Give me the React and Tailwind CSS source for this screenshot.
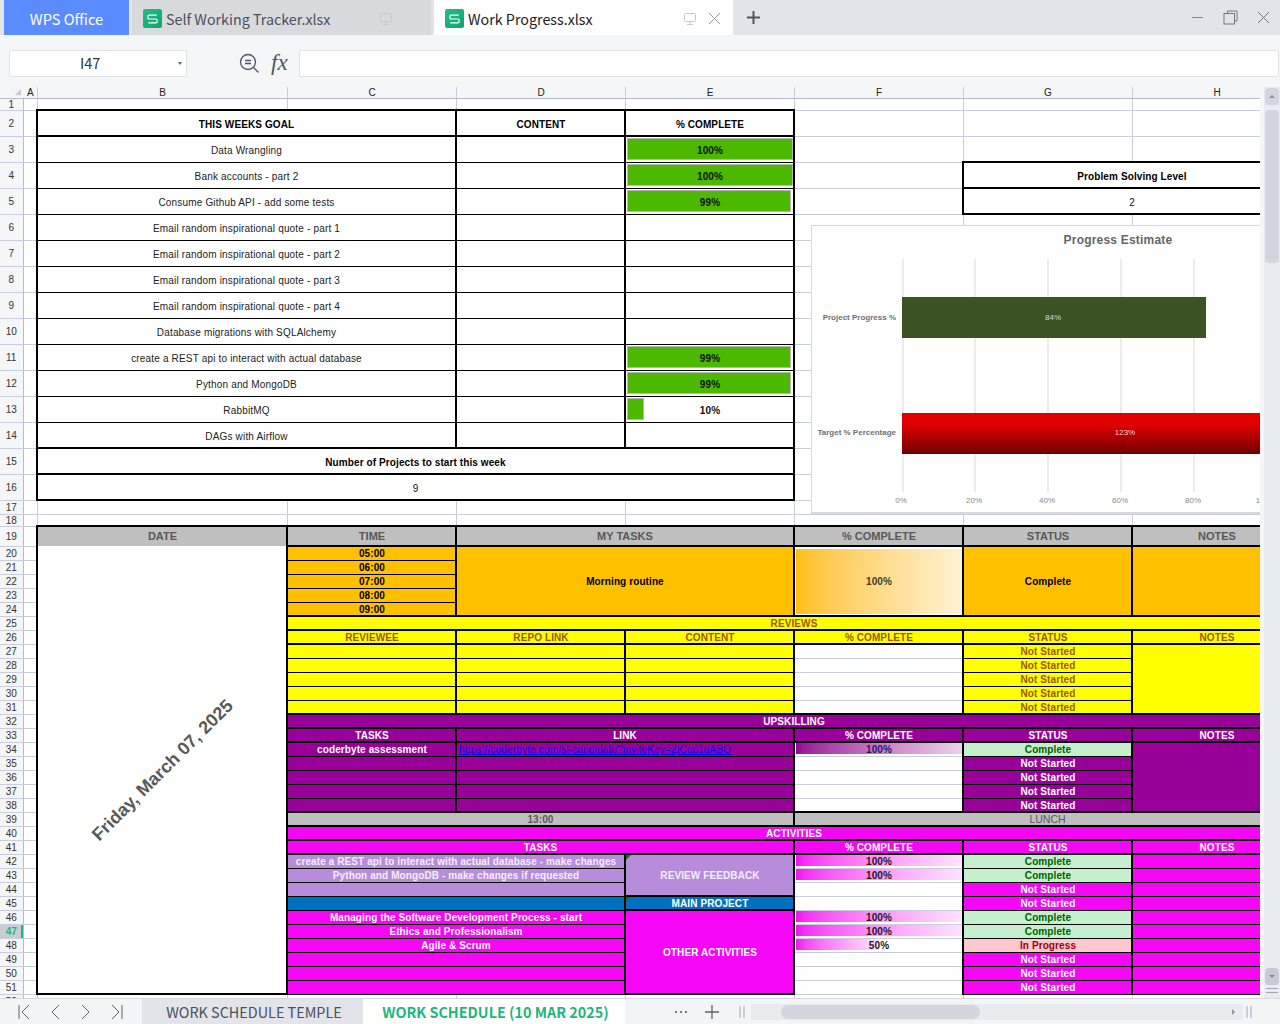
import React from "react";

const ui = "font-['Noto_Sans_CJK_SC','Noto_Sans',sans-serif]";
const GRID = "border border-[#c8cee0]";
const THICK = "border-2 border-black";
const BODY = "border-x-2 border-y border-black";
const SHELL = "p-0 text-center align-middle overflow-hidden whitespace-nowrap";
const BASE = `${SHELL} leading-none`;
const FT = "font-bold text-[10px] tracking-[0.1px]";
const B = `${FT} pt-[2px]`;
const BT = `${FT} pt-[4px]`;
const HEAD = "font-bold text-[11px]";
const GRAYC = "bg-[#bfbfbf] text-[#595959]";
const YEL = "bg-[#ffff00] text-[#9c5700]";
const PUR = "bg-[#990099] text-white";
const MAG = "bg-[#f507f5] text-white";
const ORG = "bg-[#ffc000] text-black";
const OK = "bg-[#c6efce] text-[#006100]";
const PROG = "bg-[#ffc7ce] text-[#9c0006]";
const LIL = "bg-[#b78ddb] text-[#f5eefc]";
const BLU = "bg-[#0070c0] text-white";
const H26 = "h-[26px]";
const H14 = "h-[14px]";

function C({ k = "", span, rows, children }) {
  return (
    <td colSpan={span} rowSpan={rows} className={`${BASE} ${span ? "" : "pl-[1px]"} ${k}`}>
      {children}
    </td>
  );
}

function Row({ n, h, active, children }) {
  return (
    <tr className={h}>
      <td className={`${SHELL} leading-[9px] pt-[1px] border-b border-r border-b-[#c8cee0] border-r-[#b4bbcf] text-[10px] ${active ? "bg-[#c9ccd4] text-[#1fb57c] font-bold shadow-[inset_-2px_0_0_#1fb57c]" : "bg-[#f5f6f8] text-[#333333]"}`}>{n}</td>
      <td className={`${BASE} ${GRID}`} />
      {children}
    </tr>
  );
}

const Gap = ({ n = 1 }) => Array.from({ length: n }, (_, i) => <td key={i} className={`${BASE} ${GRID}`} />);

function GoalBar({ pct, label }) {
  return (
    <div className="grid h-[22px] items-center text-[#111111]">
      <div className="[grid-area:1/1] h-[22px] bg-[#4cb800] border border-[#b5b5b5]" style={{ width: `${pct}%` }} />
      <div className={`[grid-area:1/1] pt-[4px] ${FT}`}>{label}</div>
    </div>
  );
}

function SmallBar({ pct, from, to, tc = "text-[#1b1b1b]" }) {
  return (
    <div className="grid h-[12px] items-start">
      <div className={`[grid-area:1/1] h-[11px] bg-linear-to-r ${from} ${to}`} style={{ width: `${pct}%` }} />
      <div className={`[grid-area:1/1] pt-[2px] ${FT} ${tc}`}>{pct}%</div>
    </div>
  );
}

const goals = [
  ["Data Wrangling", 100, "100%"],
  ["Bank accounts - part 2", 100, "100%"],
  ["Consume Github API - add some tests", 99, "99%"],
  ["Email random inspirational quote - part 1"],
  ["Email random inspirational quote - part 2"],
  ["Email random inspirational quote - part 3"],
  ["Email random inspirational quote - part 4"],
  ["Database migrations with SQLAlchemy"],
  ["create a REST api to interact with actual database", 99, "99%"],
  ["Python and MongoDB", 99, "99%"],
  ["RabbitMQ", 10, "10%"],
  ["DAGs with Airflow"],
];

const activity = [
  { n: 42, t: "create a REST api to interact with actual database - make changes", k: LIL, bar: 100, st: "Complete" },
  { n: 43, t: "Python and MongoDB - make changes if requested", k: LIL, bar: 100, st: "Complete" },
  { n: 44, t: "", k: LIL, st: "Not Started" },
  { n: 45, t: "", k: BLU, st: "Not Started" },
  { n: 46, t: "Managing the Software Development Process - start", k: MAG, bar: 100, st: "Complete" },
  { n: 47, t: "Ethics and Professionalism", k: MAG, bar: 100, st: "Complete" },
  { n: 48, t: "Agile & Scrum", k: MAG, bar: 50, st: "In Progress" },
  { n: 49, t: "", k: MAG, st: "Not Started" },
  { n: 50, t: "", k: MAG, st: "Not Started" },
  { n: 51, t: "", k: MAG, st: "Not Started" },
];

const Corner = () => (
  <span className="absolute top-0 left-0 w-0 h-0 border-t-[5px] border-t-[#0a7a0a] border-r-[5px] border-r-transparent" />
);

function Sheet() {
  const colHead = ["A", "B", "C", "D", "E", "F", "G", "H"];
  return (
    <table className="border-collapse table-fixed w-[1301px] font-['Liberation_Sans',Arial,sans-serif]">
      <colgroup>
        <col className="w-[23px]" />
        <col className="w-[14px]" />
        <col className="w-[250px]" />
        <col className="w-[169px]" />
        <col className="w-[169px]" />
        <col className="w-[169px]" />
        <col className="w-[169px]" />
        <col className="w-[169px]" />
        <col className="w-[169px]" />
      </colgroup>
      <tbody className="bg-white">
        <tr className="h-[11px]">
          <td className={`${BASE} bg-[#f5f6f8] border-b border-b-[#b4bbcf]`}>
            <svg width="23" height="10" viewBox="0 0 23 10" className="block"><path d="M21 2v6h-6z" fill="#c4c8d2" /></svg>
          </td>
          {colHead.map((c) => (
            <td key={c} className={`${SHELL} leading-[9px] pt-[1px] pl-[1px] bg-[#f5f6f8] border-b border-r border-b-[#b4bbcf] border-r-[#c8cee0] text-[10px] text-[#222222]`}>{c}</td>
          ))}
        </tr>
        <Row n={1} h="h-[12px]"><Gap n={7} /></Row>
        <Row n={2} h={H26}>
          <C span={2} k={`${THICK} ${BT}`}>THIS WEEKS GOAL</C>
          <C k={`${THICK} ${BT}`}>CONTENT</C>
          <C k={`${THICK} ${BT}`}>% COMPLETE</C>
          <Gap n={3} />
        </Row>
        {goals.map(([t, pct, label], i) => (
          <Row key={t} n={i + 3} h={H26}>
            <C span={2} k={`${BODY} pt-[4px] text-[10px] tracking-[0.17px] text-[#222222]`}>{t}</C>
            <C k={BODY} />
            <C k={BODY}>{pct ? <GoalBar pct={pct} label={label} /> : null}</C>
            <Gap />
            {i === 1 ? (
              <C span={2} k={`${THICK} ${BT}`}>Problem Solving Level</C>
            ) : i === 2 ? (
              <C span={2} k={`${THICK} pt-[4px] text-[10px] text-[#111111]`}>2</C>
            ) : (
              <Gap n={2} />
            )}
          </Row>
        ))}
        <Row n={15} h={H26}>
          <C span={4} k={`${THICK} ${BT}`}>Number of Projects to start this week</C>
          <Gap n={3} />
        </Row>
        <Row n={16} h={H26}>
          <C span={4} k={`${THICK} pt-[4px] text-[10px] text-[#111111]`}>9</C>
          <Gap n={3} />
        </Row>
        <Row n={17} h={H14}><Gap n={7} /></Row>
        <Row n={18} h="h-[12px]"><Gap n={7} /></Row>

        <Row n={19} h="h-[20px]">
          <C k={`border-x-2 border-t-2 border-b-0 border-black pb-[1px] ${GRAYC} ${HEAD}`}>DATE</C>
          <C k={`${THICK} ${GRAYC} ${HEAD}`}>TIME</C>
          <C span={2} k={`${THICK} ${GRAYC} ${HEAD}`}>MY TASKS</C>
          <C k={`${THICK} ${GRAYC} ${HEAD}`}>% COMPLETE</C>
          <C k={`${THICK} ${GRAYC} ${HEAD}`}>STATUS</C>
          <C k={`${THICK} ${GRAYC} ${HEAD}`}>NOTES</C>
        </Row>

        <Row n={20} h={H14}>
          <C rows={32} k="border-x-2 border-b-2 border-t-0 border-black bg-white">
            <span className="inline-block -rotate-45 font-bold text-[18px] text-[#595959]">Friday, March 07, 2025</span>
          </C>
          <C k={`${BODY} ${ORG} ${B}`}>05:00</C>
          <C span={2} rows={5} k={`${THICK} ${ORG} ${B}`}>Morning routine</C>
          <C rows={5} k={`${THICK} bg-white`}>
            <div className={`h-[65px] bg-linear-to-r from-[#ffc000] to-[#fff2d2] flex items-center justify-center ${B} text-[#3f3a1a]`}>100%</div>
          </C>
          <C rows={5} k={`${THICK} ${ORG} ${B}`}>Complete</C>
          <C rows={5} k={`${THICK} ${ORG}`} />
        </Row>
        {["06:00", "07:00", "08:00", "09:00"].map((t, i) => (
          <Row key={t} n={21 + i} h={H14}>
            <C k={`${BODY} ${ORG} ${B}`}>{t}</C>
          </Row>
        ))}

        <Row n={25} h={H14}>
          <C span={6} k={`${THICK} ${YEL} ${B}`}>REVIEWS</C>
        </Row>
        <Row n={26} h={H14}>
          {["REVIEWEE", "REPO LINK", "CONTENT", "% COMPLETE", "STATUS", "NOTES"].map((t) => (
            <C key={t} k={`${THICK} ${YEL} ${B}`}>{t}</C>
          ))}
        </Row>
        {[27, 28, 29, 30, 31].map((n) => (
          <Row key={n} n={n} h={H14}>
            <C k={`${BODY} ${YEL}`} />
            <C k={`${BODY} ${YEL}`} />
            <C k={`${BODY} ${YEL}`} />
            <C k="border-x-2 border-x-black border-y border-y-[#c8cee0] bg-white" />
            <C k={`${BODY} ${YEL} ${B}`}>Not Started</C>
            {n === 27 ? <C rows={5} k={`${THICK} ${YEL}`} /> : null}
          </Row>
        ))}

        <Row n={32} h={H14}>
          <C span={6} k={`${THICK} ${PUR} ${B}`}>UPSKILLING</C>
        </Row>
        <Row n={33} h={H14}>
          <C k={`${THICK} ${PUR} ${B}`}>TASKS</C>
          <C span={2} k={`${THICK} ${PUR} ${B}`}>LINK</C>
          <C k={`${THICK} ${PUR} ${B}`}>% COMPLETE</C>
          <C k={`${THICK} ${PUR} ${B}`}>STATUS</C>
          <C k={`${THICK} ${PUR} ${B}`}>NOTES</C>
        </Row>
        {[34, 35, 36, 37, 38].map((n) => (
          <Row key={n} n={n} h={H14}>
            <C k={`${BODY} ${PUR} ${B}`}>{n === 34 ? "coderbyte assessment" : ""}</C>
            <C span={2} k={`${BODY} ${PUR} text-left pl-[2px] pt-[2px] text-[10px] tracking-[0.17px]`}>
              {n === 34 ? (
                <a href="#" className="text-[#0000ff] underline">https://coderbyte.com/sl-candidate?inviteKey=ZjCac1uABQ</a>
              ) : null}
            </C>
            <C k="border-x-2 border-x-black border-y border-y-[#c8cee0] bg-white">
              {n === 34 ? <SmallBar pct={100} from="from-[#990099]" to="to-[#ecd2ec]" tc="text-[#1e1a6e]" /> : null}
            </C>
            <C k={`${BODY} ${n === 34 ? OK : PUR} ${B}`}>{n === 34 ? "Complete" : "Not Started"}</C>
            {n === 34 ? <C rows={5} k={`${THICK} ${PUR}`} /> : null}
          </Row>
        ))}

        <Row n={39} h={H14}>
          <C span={3} k={`${THICK} ${GRAYC} ${B}`}>13:00</C>
          <C span={3} k={`${THICK} ${GRAYC} text-[10.5px]`}>LUNCH</C>
        </Row>
        <Row n={40} h={H14}>
          <C span={6} k={`${THICK} ${MAG} ${B}`}>ACTIVITIES</C>
        </Row>
        <Row n={41} h={H14}>
          <C span={3} k={`${THICK} ${MAG} ${B}`}>TASKS</C>
          <C k={`${THICK} ${MAG} ${B}`}>% COMPLETE</C>
          <C k={`${THICK} ${MAG} ${B}`}>STATUS</C>
          <C k={`${THICK} ${MAG} ${B}`}>NOTES</C>
        </Row>
        {activity.map((a) => (
          <Row key={a.n} n={a.n} h={H14} active={a.n === 47}>
            <C span={2} k={`${BODY} ${a.k} ${B}`}>{a.t}</C>
            {a.n === 42 ? (
              <C rows={3} k={`${THICK} ${LIL} ${B} relative`}>
                <Corner />
                REVIEW FEEDBACK
              </C>
            ) : null}
            {a.n === 45 ? (
              <C k={`${THICK} ${BLU} ${B} relative`}>
                <Corner />
                MAIN PROJECT
              </C>
            ) : null}
            {a.n === 46 ? (
              <C rows={6} k={`${THICK} ${MAG} ${B}`}>OTHER ACTIVITIES</C>
            ) : null}
            <C k="border-x-2 border-x-black border-y border-y-[#c8cee0] bg-white">
              {a.bar ? <SmallBar pct={a.bar} from="from-[#f20cf2]" to="to-[#fde3fd]" /> : null}
            </C>
            <C k={`${BODY} ${a.st === "Complete" ? OK : a.st === "In Progress" ? PROG : MAG} ${B}`}>{a.st}</C>
            <C k={`${BODY} ${MAG}`} />
          </Row>
        ))}
        <Row n={52} h={H14}><Gap n={7} /></Row>
      </tbody>
    </table>
  );
}

function Chart() {
  const txt = "font-['Liberation_Sans',Arial,sans-serif]";
  const lines = [91, 163, 236, 309, 382];
  return (
    <div className="absolute left-[811px] top-[138px] w-[470px] h-[289px] bg-white border border-[#d9d9d9] border-b-2">
      <svg width="468" height="287" viewBox="0 0 468 287" className={`block ${txt}`}>
        <defs>
          <linearGradient id="red" x1="0" y1="0" x2="0" y2="1">
            <stop offset="0.28" stopColor="#e00000" />
            <stop offset="1" stopColor="#700000" />
          </linearGradient>
        </defs>
        <text x="306" y="18" textAnchor="middle" fontSize="12" fontWeight="700" fill="#666666" letterSpacing="0.2">Progress Estimate</text>
        {lines.map((x) => (
          <line key={x} x1={x} x2={x} y1="33" y2="266" stroke="#d9d9d9" strokeWidth="1" />
        ))}
        <rect x="90" y="71" width="304" height="41" fill="#3b5323" />
        <rect x="90" y="187" width="400" height="41" fill="url(#red)" />
        <text x="241" y="94" textAnchor="middle" fontSize="8" fill="#d9d9d9">84%</text>
        <text x="313" y="209" textAnchor="middle" fontSize="8" fill="#f0d0d0">123%</text>
        <text x="84" y="94" textAnchor="end" fontSize="8" fontWeight="700" fill="#707070">Project Progress %</text>
        <text x="84" y="209" textAnchor="end" fontSize="8" fontWeight="700" fill="#707070">Target % Percentage</text>
        {[["0%", 89], ["20%", 162], ["40%", 235], ["60%", 308], ["80%", 381], ["100%", 454]].map(([t, x]) => (
          <text key={t} x={x} y="277" textAnchor="middle" fontSize="8" fill="#8a8a8a">{t}</text>
        ))}
      </svg>
    </div>
  );
}

const SIcon = () => (
  <span className="flex w-[19px] h-[19px] rounded-[2px] bg-linear-to-br from-[#1fbf8a] to-[#12a46c] items-center justify-center shrink-0">
    <svg width="11" height="10" viewBox="0 0 13 11" fill="none" stroke="white" strokeWidth="1.4">
      <path d="M11.5 1H2.5a1.5 1.5 0 0 0-1.5 1.5V4a1.5 1.5 0 0 0 1.5 1.5h8A1.5 1.5 0 0 1 12 7v1.5a1.5 1.5 0 0 1-1.5 1.5H1.5" />
    </svg>
  </span>
);

const Monitor = ({ color }) => (
  <svg width="14" height="14" viewBox="0 0 14 14" fill="none" stroke={color} strokeWidth="1">
    <rect x="1.5" y="1.5" width="11" height="8" rx="1" />
    <path d="M7 9.5v3M4 12.5h6" />
  </svg>
);

function TabBar() {
  return (
    <div className={`h-[35px] bg-[#e2e4e9] flex shrink-0 ${ui}`}>
      <div className="ml-[4px] w-[125px] pt-[2px] bg-[#5b8cff] text-white text-[14.6px] flex items-center justify-center">WPS Office</div>
      <div className="ml-[3px] w-[299px] pt-[2px] bg-[#d8dade] flex items-center pl-[11px] pr-[38px] text-[14.3px] text-[#4a5060]">
        <SIcon />
        <span className="ml-[4px] flex-1">Self Working Tracker.xlsx</span>
        <Monitor color="#c7cad3" />
      </div>
      <div className="ml-[3px] w-[299px] pt-[2px] bg-white flex items-center pl-[11px] pr-[12px] text-[14.3px] text-[#222222]">
        <SIcon />
        <span className="ml-[4px] flex-1">Work Progress.xlsx</span>
        <Monitor color="#c2c7d2" />
        <svg className="ml-[11px]" width="13" height="13" viewBox="0 0 13 13" stroke="#9aa0ae" strokeWidth="1"><path d="M1 1l11 11M12 1L1 12" /></svg>
      </div>
      <div className="ml-[13px] flex items-center">
        <svg width="15" height="15" viewBox="0 0 15 15" stroke="#4d5566" strokeWidth="2"><path d="M7.5 1v13M1 7.5h13" /></svg>
      </div>
      <div className="ml-auto flex items-center gap-[19px] pr-[10px]">
        <svg width="13" height="13" viewBox="0 0 13 13" stroke="#7f8694" strokeWidth="1"><path d="M1 6.5h11" /></svg>
        <svg width="15" height="15" viewBox="0 0 15 15" fill="none" stroke="#6f7685" strokeWidth="1"><path d="M4.5 3.5V1h9.5v10h-2.5" /><rect x="1" y="3.5" width="10.5" height="10.5" /></svg>
        <svg width="13" height="13" viewBox="0 0 13 13" stroke="#6f7685" strokeWidth="1"><path d="M1 1l11 11M12 1L1 12" /></svg>
      </div>
    </div>
  );
}

function FormulaBar() {
  return (
    <div className="h-[52px] bg-[#f5f6f8] flex items-center pl-[9px] pr-[1px] shrink-0 pt-[4px] font-['Noto_Sans_CJK_SC','Noto_Sans',sans-serif]">
      <div className="w-[178px] h-[27px] bg-white border border-[#dfe1e7] rounded-[2px] flex items-center pl-[70px] text-[14.5px] text-[#333333] relative">
        I47
        <span className="absolute right-[4px] top-[11px] w-0 h-0 border-x-[2.5px] border-x-transparent border-t-[3px] border-t-[#666666]" />
      </div>
      <svg className="ml-[52px]" width="21" height="21" viewBox="0 0 21 21" fill="none" stroke="#4d5566" strokeWidth="1.3">
        <circle cx="9" cy="9" r="7.5" />
        <path d="M14.5 14.5l5 5M6 7.5h6M6 10.5h6" />
      </svg>
      <span className="ml-[11px] w-[28px] font-['Liberation_Serif',serif] italic text-[23px] text-[#4d5566]">fx</span>
      <div className="flex-1 h-[27px] bg-white border border-[#dfe1e7] rounded-[2px]" />
    </div>
  );
}

function VScroll() {
  return (
    <div className="w-[20px] shrink-0 bg-[#f5f6f8] flex">
      <div className="ml-[4px] w-[16px] bg-[#e9ebf0] flex flex-col items-center pt-[1px]">
        <div className="w-[14px] h-[17px] rounded-[4px] bg-[#d3d6de] flex items-center justify-center">
          <span className="w-0 h-0 border-x-[3px] border-x-transparent border-b-[3px] border-b-[#8a93a6]" />
        </div>
        <div className="mt-[5px] w-[14px] h-[153px] rounded-[4px] bg-[#d3d6de]" />
        <div className="mt-auto mb-[3px] w-[14px] h-[17px] rounded-[4px] bg-[#c6cad4] flex items-center justify-center">
          <span className="w-0 h-0 border-x-[3px] border-x-transparent border-t-[3px] border-t-[#7e8799]" />
        </div>
        <svg className="mb-[5px]" width="12" height="5" viewBox="0 0 12 5" stroke="#a0a6b4" strokeWidth="1"><path d="M0 0.5h12M0 4.5h12" /></svg>
      </div>
    </div>
  );
}

function BottomBar() {
  return (
    <div className={`h-[26px] bg-[#f3f4f6] border-t border-[#d6d9e0] flex shrink-0 ${ui}`}>
      <div className="w-[142px] flex items-center pl-[18px] gap-[19px]">
        <svg width="12" height="16" viewBox="0 0 12 16" fill="none" stroke="#5c6375" strokeWidth="1"><path d="M1 1v14M11 1L4 8l7 7" /></svg>
        <svg width="12" height="16" viewBox="0 0 12 16" fill="none" stroke="#5c6375" strokeWidth="1"><path d="M10 1L3 8l7 7" /></svg>
        <svg width="12" height="16" viewBox="0 0 12 16" fill="none" stroke="#5c6375" strokeWidth="1"><path d="M2 1l7 7-7 7" /></svg>
        <svg width="12" height="16" viewBox="0 0 12 16" fill="none" stroke="#5c6375" strokeWidth="1"><path d="M1 1l7 7-7 7M11 1v14" /></svg>
      </div>
      <div className="w-[221px] pl-[3px] bg-[#e2e4e9] flex items-center justify-center text-[14.4px] text-[#4a5060]">WORK SCHEDULE TEMPLE</div>
      <div className="w-[262px] pl-[3px] bg-white flex items-center justify-center text-[14.4px] font-semibold text-[#1fb57c]">WORK SCHEDULE (10 MAR 2025)</div>
      <div className="flex-1 flex items-center">
        <span className="ml-[50px] flex gap-[3px]">
          <i className="w-[2px] h-[2px] rounded-full bg-[#4d5566]" /><i className="w-[2px] h-[2px] rounded-full bg-[#4d5566]" /><i className="w-[2px] h-[2px] rounded-full bg-[#4d5566]" />
        </span>
        <svg className="ml-[17px]" width="16" height="16" viewBox="0 0 16 16" stroke="#5c6375" strokeWidth="1.3"><path d="M8 1v14M1 8h14" /></svg>
        <svg className="ml-[19px]" width="7" height="12" viewBox="0 0 7 12" stroke="#a0a6b4" strokeWidth="1"><path d="M1 0v12M5 0v12" /></svg>
        <div className="ml-[5px] w-[492px] h-[16px] bg-[#e9ebf0] flex items-center pl-[30px] pr-[8px]">
          <div className="w-[199px] h-[14px] rounded-full bg-[#d3d6de]" />
          <span className="ml-auto w-0 h-0 border-y-[3px] border-y-transparent border-l-[3px] border-l-[#8a93a6]" />
        </div>
        <svg className="ml-[3px]" width="7" height="12" viewBox="0 0 7 12" stroke="#a0a6b4" strokeWidth="1"><path d="M1 0v12M5 0v12" /></svg>
      </div>
    </div>
  );
}

export default function App() {
  return (
    <div className="w-[1280px] h-[1024px] bg-white flex flex-col overflow-hidden">
      <TabBar />
      <FormulaBar />
      <div className="flex h-[911px] overflow-hidden">
        <div className="relative w-[1260px] overflow-hidden">
          <Sheet />
          <Chart />
        </div>
        <VScroll />
      </div>
      <BottomBar />
    </div>
  );
}
